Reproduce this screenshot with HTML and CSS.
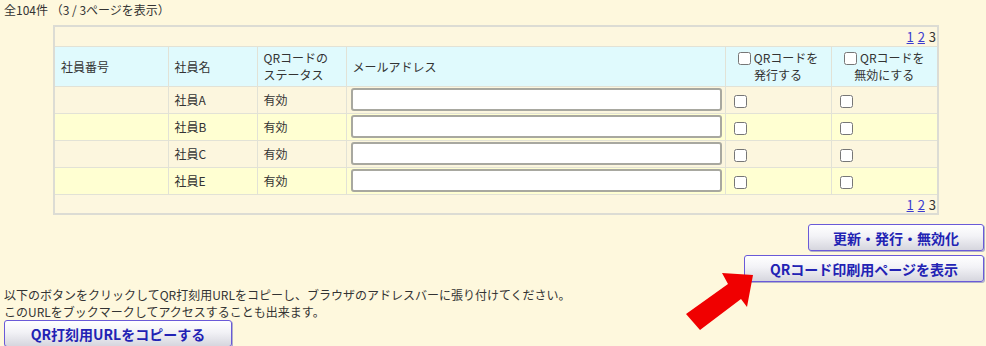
FILE: index.html
```html
<!DOCTYPE html>
<html lang="ja">
<head>
  <meta charset="UTF-8">
  <title>QRコード管理</title>
  <link rel="stylesheet" href="styles.css">
</head>
<body>

<div class="kensu">全104件 （3 / 3ページを表示）</div>

<table class="ichiran">
  <colgroup>
    <col class="c-bango">
    <col class="c-namae">
    <col class="c-status">
    <col class="c-mail">
    <col class="c-hakko">
    <col class="c-muko">
  </colgroup>
  <tr class="pager">
    <td colspan="6"><a href="#">1</a> <a href="#">2</a> 3</td>
  </tr>
  <tr class="midashi">
    <th>社員番号</th>
    <th>社員名</th>
    <th>QRコードの<br>ステータス</th>
    <th>メールアドレス</th>
    <th class="chk"><input type="checkbox">QRコードを<br>発行する</th>
    <th class="chk"><input type="checkbox">QRコードを<br>無効にする</th>
  </tr>
  <tr class="gyo">
    <td></td><td>社員A</td><td>有効</td>
    <td class="mail"><input type="text"></td>
    <td><input type="checkbox"></td><td><input type="checkbox"></td>
  </tr>
  <tr class="gyo">
    <td></td><td>社員B</td><td>有効</td>
    <td class="mail"><input type="text"></td>
    <td><input type="checkbox"></td><td><input type="checkbox"></td>
  </tr>
  <tr class="gyo">
    <td></td><td>社員C</td><td>有効</td>
    <td class="mail"><input type="text"></td>
    <td><input type="checkbox"></td><td><input type="checkbox"></td>
  </tr>
  <tr class="gyo">
    <td></td><td>社員E</td><td>有効</td>
    <td class="mail"><input type="text"></td>
    <td><input type="checkbox"></td><td><input type="checkbox"></td>
  </tr>
  <tr class="pager">
    <td colspan="6"><a href="#">1</a> <a href="#">2</a> 3</td>
  </tr>
</table>

<div class="botan-area">
  <button class="botan b-koshin">更新・発行・無効化</button>
  <button class="botan b-insatsu">QRコード印刷用ページを表示</button>
</div>

<p class="setsumei">以下のボタンをクリックしてQR打刻用URLをコピーし、ブラウザのアドレスバーに張り付けてください。<br>このURLをブックマークしてアクセスすることも出来ます。</p>
<button class="botan b-copy">QR打刻用URLをコピーする</button>

<!-- 赤い矢印 -->
<svg class="yajirushi" width="72" height="64" viewBox="0 0 72 64">
  <polygon points="2,44 44,14 38,3 69,5 63,37 57,29 16,60" fill="#f00000"/>
</svg>

</body>
</html>
```

FILE: styles.css
```css
* {
  box-sizing: border-box;
}

body {
  margin: 0;
  padding: 1px 2px 0 4px;
  background: #fef8dd;
  font-family: "Noto Sans CJK JP", "Noto Sans", sans-serif;
  font-size: 12px;
  color: #333;
  height: 346px;
  overflow: hidden;
  position: relative;
}

.kensu {
  line-height: 18px;
  margin-bottom: 6px;
}

.ichiran {
  margin-left: 49px;
  width: 884px;
  border-collapse: collapse;
  table-layout: fixed;
  border: 2px solid #dcdcd4;
}

.c-bango { width: 114px; }
.c-namae { width: 89px; }
.c-status { width: 89px; }
.c-mail { width: 379px; }
.c-hakko { width: 106px; }
.c-muko { width: 107px; }

.ichiran th,
.ichiran td {
  border: 1px solid #e2e2d6;
  padding: 0 6px;
  text-align: left;
  font-weight: normal;
}

.pager td {
  height: 20px;
  text-align: right !important;
  padding: 1px 1px 0 0;
  border-left: none;
  border-right: none;
  background: #fdf7df;
  font-size: 13px;
  line-height: 15px;
}

.pager a {
  color: #3b3bd0;
  margin-right: 1px;
}

.midashi th {
  background: #e0fafd;
  height: 40px;
  line-height: 17px;
}

.midashi th.chk {
  text-align: center;
  padding: 0 4px;
}

.midashi th.chk input {
  margin: 0 3px 0 0;
  vertical-align: -2px;
}

.gyo td {
  height: 27px;
  background: #fcf6de;
}

.gyo:nth-child(even) td {
  background: #ffffd2;
}

.gyo td input[type="checkbox"] {
  margin: 0 0 0 2px;
  vertical-align: middle;
}

.gyo td.mail {
  padding: 0 3px 0 4px;
}

.mail input {
  display: block;
  width: 100%;
  height: 23px;
  border: 2px solid #a8a8a0;
  border-radius: 3px;
  background: white;
}

.botan-area {
  display: flex;
  flex-direction: column;
  align-items: flex-end;
  gap: 4px;
  margin-top: 9px;
}

.botan {
  font-family: "Noto Sans CJK JP", "Noto Sans", sans-serif;
  font-size: 14px;
  font-weight: bold;
  color: #2222b4;
  height: 27px;
  padding: 0;
  border: 1px solid #6a5ad8;
  border-radius: 3px;
  background: linear-gradient(#ffffff, #f2f2f6 45%, #d6d6de);
  box-shadow: 1px 1px 0 #b0b0c8;
  cursor: pointer;
}

.b-koshin { width: 176px; }
.b-insatsu { width: 240px; }
.b-copy { width: 228px; line-height: 22px; }

.setsumei {
  margin: 4px 0 0;
  line-height: 17px;
}

.yajirushi {
  position: absolute;
  left: 684px;
  top: 270px;
}
```
